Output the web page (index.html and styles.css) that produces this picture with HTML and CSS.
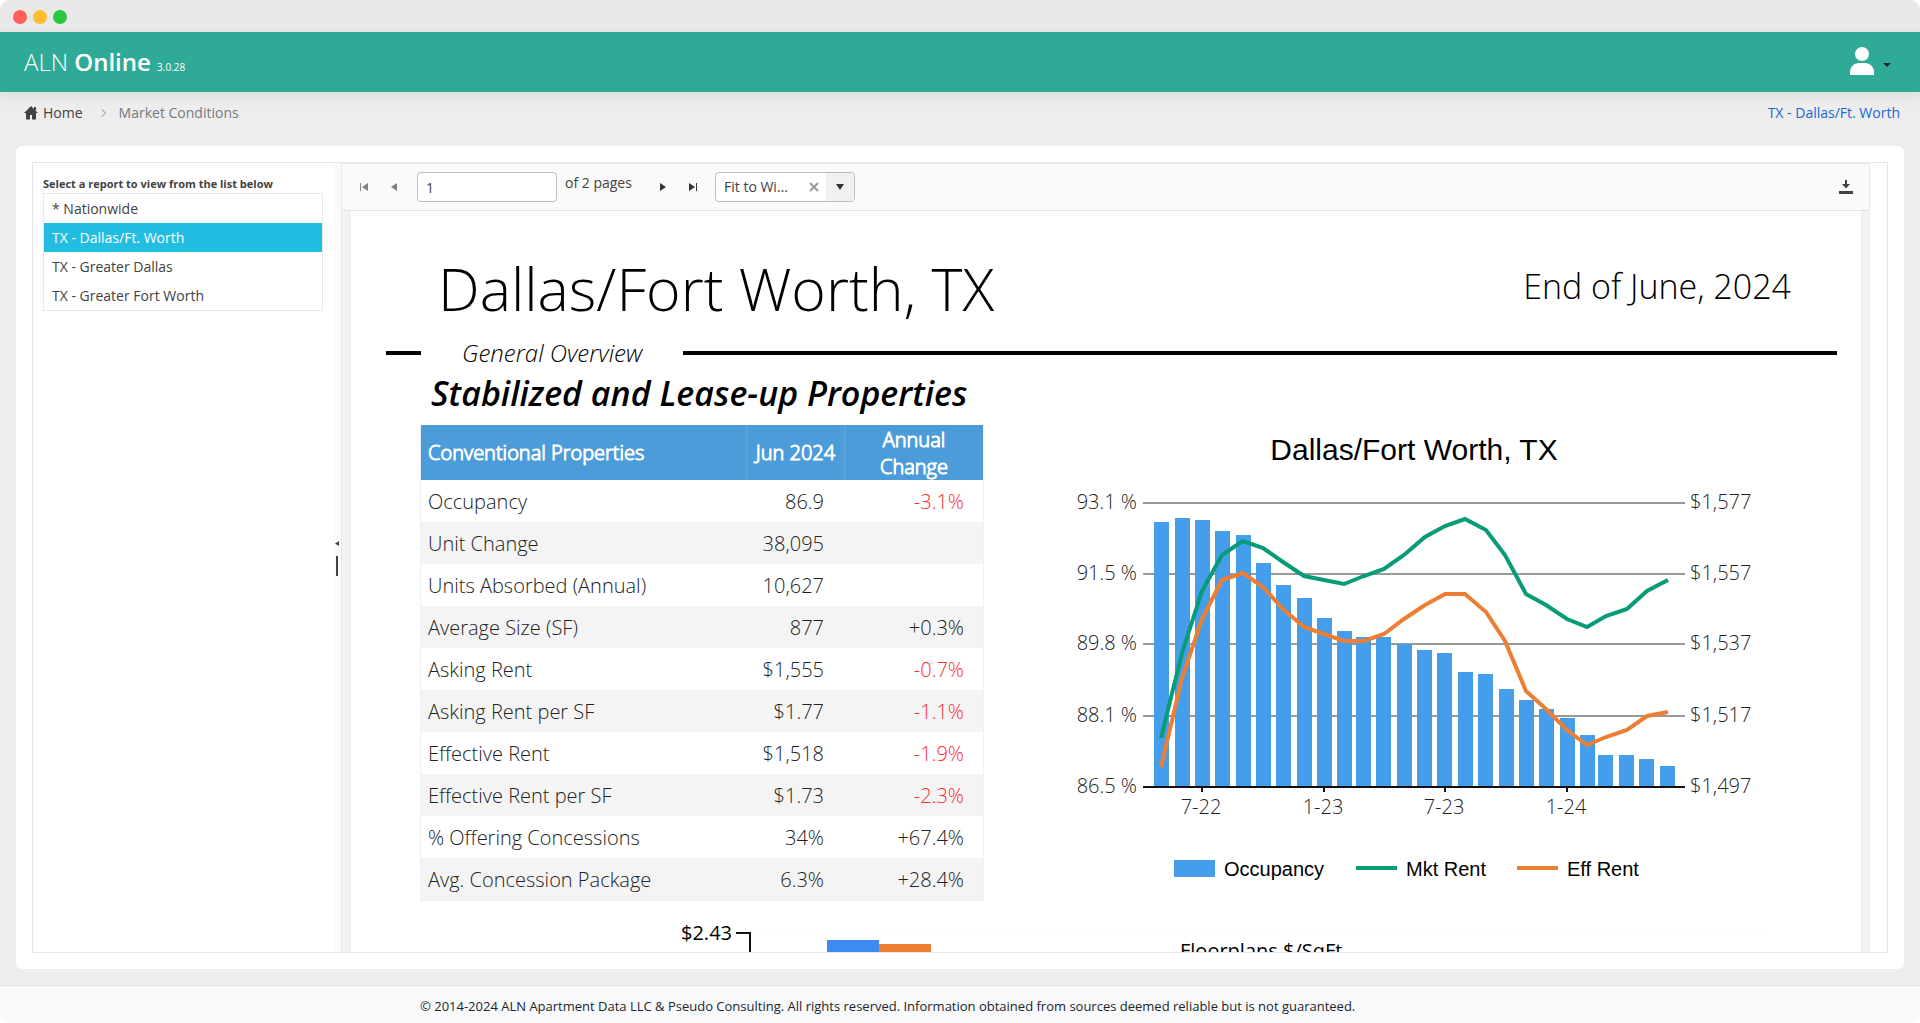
FILE: index.html
```html
<!DOCTYPE html>
<html lang="en">
<head>
<meta charset="utf-8">
<title>ALN Online - Market Conditions</title>
<meta name="viewport" content="width=device-width, initial-scale=1">
<link rel="stylesheet" href="styles.css">
</head>
<body>
<div class="window">
  <div class="titlebar">
    <span class="dot dot-close"></span>
    <span class="dot dot-min"></span>
    <span class="dot dot-max"></span>
  </div>

  <header class="header">
    <a class="brand" href="#"><span class="brand-light">ALN</span> <strong class="brand-strong">Online</strong> <small class="version">3.0.28</small></a>
    <button class="user" type="button" aria-label="Account">
      <svg class="user-icon" viewBox="0 0 26 30" aria-hidden="true"><circle cx="13" cy="8" r="7"/><path d="M1 29v-3c0-5 4-9 9-9h6c5 0 9 4 9 9v3z"/></svg>
      <span class="caret"></span>
    </button>
  </header>

  <nav class="crumbs" aria-label="Breadcrumb">
    <a class="crumb-home" href="#">
      <svg class="home-icon" viewBox="0 0 14 14" aria-hidden="true"><path d="M7 0 14 7h-2v6.500h-4V9H6v4.500H2V7H0z"/><path d="M10 1h2v3h-2z"/></svg>
      Home</a>
    <svg class="chevron" viewBox="0 0 6 8" aria-hidden="true"><path d="M1 .5 4.500 4 1 7.500"/></svg>
    <span class="crumb-current">Market Conditions</span>
    <a class="market-link" href="#">TX - Dallas/Ft. Worth</a>
  </nav>

  <main class="card">
    <div class="splitter">
      <aside class="side">
        <h2 class="side-title">Select a report to view from the list below</h2>
        <ul class="reports">
          <li><button class="report" type="button">* Nationwide</button></li>
          <li><button class="report report-active" type="button">TX - Dallas/Ft. Worth</button></li>
          <li><button class="report" type="button">TX - Greater Dallas</button></li>
          <li><button class="report" type="button">TX - Greater Fort Worth</button></li>
        </ul>
      </aside>
      <div class="splitbar">
        <svg class="split-arrow" viewBox="0 0 4 5" aria-hidden="true"><path d="M4 0v5L0 2.500z"/></svg>
        <span class="split-grip"></span>
      </div>

      <section class="viewer">
        <div class="toolbar">
          <button class="tool tool-off" type="button" aria-label="First page"><svg class="tool-icon" viewBox="0 0 8 8"><path d="M0 0h1v8H0zM8 0v8L2 4z"/></svg></button>
          <button class="tool tool-off" type="button" aria-label="Previous page"><svg class="tool-icon" viewBox="0 0 8 8"><path d="M7 0v8L1 4z"/></svg></button>
          <input class="page-input" type="text" value="1" aria-label="Page number">
          <span class="page-total">of 2 pages</span>
          <button class="tool" type="button" aria-label="Next page"><svg class="tool-icon" viewBox="0 0 8 8"><path d="M1 0v8l6-4z"/></svg></button>
          <button class="tool" type="button" aria-label="Last page"><svg class="tool-icon" viewBox="0 0 8 8"><path d="M7 0h1v8H7zM0 0v8l6-4z"/></svg></button>
          <div class="zoom">
            <select class="zoom-select" aria-label="Zoom"><option>Fit to Width</option></select>
            <button class="zoom-clear" type="button" aria-label="Clear"><svg class="clear-icon" viewBox="0 0 10 10"><path d="m1 1 8 8M9 1 1 9"/></svg></button>
            <span class="zoom-arrow"><svg class="tool-icon" viewBox="0 0 8 8" aria-hidden="true"><path d="M0 1h8L4 7z"/></svg></span>
          </div>
          <button class="tool download" type="button" aria-label="Download"><svg class="download-icon" viewBox="0 0 14 14"><path d="M6 0h2v4h3L7 8.500 3 4h3zM0 11h14v3H0z"/></svg></button>
        </div>

        <div class="pages">
          <article class="page">
            <div class="page-head">
              <h1 class="page-title">Dallas/Fort Worth, TX</h1>
              <p class="page-date">End of June, 2024</p>
            </div>
            <div class="rule">
              <span class="overview">General Overview</span>
            </div>
            <h2 class="subtitle">Stabilized and Lease-up Properties</h2>

            <div class="overview-grid">
              <table class="stats">
                <colgroup><col class="col-name"><col class="col-value"><col class="col-change"></colgroup>
                <thead>
                  <tr><th class="name">Conventional Properties</th><th>Jun 2024</th><th>Annual<br>Change</th></tr>
                </thead>
                <tbody>
                  <tr><td>Occupancy</td><td>86.9</td><td class="down">-3.1%</td></tr>
                  <tr><td>Unit Change</td><td>38,095</td><td></td></tr>
                  <tr><td>Units Absorbed (Annual)</td><td>10,627</td><td></td></tr>
                  <tr><td>Average Size (SF)</td><td>877</td><td>+0.3%</td></tr>
                  <tr><td>Asking Rent</td><td>$1,555</td><td class="down">-0.7%</td></tr>
                  <tr><td>Asking Rent per SF</td><td>$1.77</td><td class="down">-1.1%</td></tr>
                  <tr><td>Effective Rent</td><td>$1,518</td><td class="down">-1.9%</td></tr>
                  <tr><td>Effective Rent per SF</td><td>$1.73</td><td class="down">-2.3%</td></tr>
                  <tr><td>% Offering Concessions</td><td>34%</td><td>+67.4%</td></tr>
                  <tr><td>Avg. Concession Package</td><td>6.3%</td><td>+28.4%</td></tr>
                </tbody>
              </table>

              <svg class="chart" viewBox="0 0 694 474" role="img" aria-label="Occupancy and rent, Dallas/Fort Worth, TX">
                <text class="chart-title" x="343" y="35">Dallas/Fort Worth, TX</text>
                <path class="grid-line" d="M72 78h542M72 149h542M72 219h542M72 291h542"/>
                <g class="bars">
                  <rect x="83" y="97" width="15" height="265"/><rect x="104" y="93" width="15" height="269"/>
                  <rect x="124" y="95" width="15" height="267"/><rect x="144" y="106" width="15" height="256"/>
                  <rect x="165" y="110" width="15" height="252"/><rect x="185" y="138" width="15" height="224"/>
                  <rect x="205" y="160" width="15" height="202"/><rect x="226" y="173" width="15" height="189"/>
                  <rect x="246" y="193" width="15" height="169"/><rect x="266" y="206" width="15" height="156"/>
                  <rect x="285" y="212" width="15" height="150"/><rect x="305" y="212" width="15" height="150"/>
                  <rect x="326" y="219" width="15" height="143"/><rect x="346" y="225" width="15" height="137"/>
                  <rect x="366" y="228" width="15" height="134"/><rect x="387" y="247" width="15" height="115"/>
                  <rect x="407" y="249" width="15" height="113"/><rect x="428" y="264" width="15" height="98"/>
                  <rect x="448" y="275" width="15" height="87"/><rect x="468" y="284" width="15" height="78"/>
                  <rect x="489" y="293" width="15" height="69"/><rect x="509" y="310" width="15" height="52"/>
                  <rect x="527" y="330" width="15" height="32"/><rect x="548" y="330" width="15" height="32"/>
                  <rect x="568" y="334" width="15" height="28"/><rect x="589" y="341" width="15" height="21"/>
                </g>
                <path class="axis" d="M72 362h542M131 362v5M253 362v5M374 362v5M496 362v5"/>
                <polyline class="line line-mkt" points="90,313 111,228 131,166 151,130 172,116 192,123 212,137 233,151 253,155 273,159 293,151 313,144 333,130 354,112 374,101 394,94 415,105 434,130 455,169 475,180 496,194 516,202 535,191 556,184 576,166 597,155"/>
                <polyline class="line line-eff" points="90,342 111,253 131,194 151,155 172,148 192,162 212,184 233,202 253,209 273,216 293,216 313,209 333,194 354,180 374,169 394,169 415,187 434,216 455,266 475,284 496,305 516,320 535,312 556,305 576,291 597,287"/>
                <g class="tick tick-left">
                  <text x="66" y="84">93.1 %</text><text x="66" y="155">91.5 %</text><text x="66" y="225">89.8 %</text><text x="66" y="297">88.1 %</text><text x="66" y="368">86.5 %</text>
                </g>
                <g class="tick">
                  <text x="619" y="84">$1,577</text><text x="619" y="155">$1,557</text><text x="619" y="225">$1,537</text><text x="619" y="297">$1,517</text><text x="619" y="368">$1,497</text>
                </g>
                <g class="tick tick-bottom">
                  <text x="130" y="389">7-22</text><text x="252" y="389">1-23</text><text x="373" y="389">7-23</text><text x="495" y="389">1-24</text>
                </g>
                <g class="bars"><rect x="103" y="435" width="41" height="17"/></g>
                <path class="line line-mkt" d="M285 443h41"/>
                <path class="line line-eff" d="M446 443h41"/>
                <g class="legend">
                  <text x="153" y="451">Occupancy</text><text x="335" y="451">Mkt Rent</text><text x="496" y="451">Eff Rent</text>
                </g>
              </svg>
            </div>

            <svg class="chart sqft" viewBox="0 0 1510 160" role="img" aria-label="Floorplans price per square foot">
              <path class="faint-line" d="M400 18h1018"/>
              <path class="axis" d="M385 18h14v142"/>
              <text class="sqft-label sqft-tick" x="381" y="25">$2.43</text>
              <rect class="sqft-mkt" x="476" y="25" width="52" height="135"/>
              <rect class="sqft-eff" x="528" y="29" width="52" height="131"/>
              <text class="sqft-label" x="829" y="43">Floorplans $/SqFt</text>
            </svg>
          </article>
        </div>
      </section>
    </div>
  </main>

  <footer class="footer">
    <p class="legal">© 2014-2024 ALN Apartment Data LLC &amp; Pseudo Consulting. All rights reserved. Information obtained from sources deemed reliable but is not guaranteed.</p>
  </footer>
</div>
</body>
</html>
```
FILE: styles.css
```css
* { box-sizing: border-box; }

body {
  margin: 0;
  background: #fff;
  color: #424242;
  font: 14px/20px "Open Sans", "Noto Sans", sans-serif;
}

h1, h2, p, ul { margin: 0; padding: 0; }
button, input, select { font: inherit; color: inherit; }
button { border: 0; padding: 0; background: none; cursor: pointer; }
a { color: inherit; text-decoration: none; }
svg { display: block; }

.window {
  display: flex;
  flex-direction: column;
  height: 100vh;
  border-radius: 10px;
  overflow: hidden;
  background: #ededed;
}

.titlebar {
  display: flex;
  flex: none;
  align-items: center;
  gap: 6px;
  height: 32px;
  padding: 2px 13px 0;
  background: #e8e8e8;
}
.dot { width: 14px; height: 14px; border-radius: 50%; }
.dot-close { background: #ff5f57; }
.dot-min { background: #febc2e; }
.dot-max { background: #28c840; }

.header {
  display: flex;
  flex: none;
  align-items: center;
  justify-content: space-between;
  height: 60px;
  padding: 0 29px 0 24px;
  background: #2faa96;
  box-shadow: 0 4px 12px rgba(0, 0, 0, .08);
  color: #fff;
}
.brand { padding-top: 4px; font-size: 24px; line-height: 32px; }
.brand-light { font-weight: 300; }
.brand-strong { font-weight: 600; }
.version { font-size: 10px; }
.user { display: flex; align-items: center; gap: 8px; padding-bottom: 2px; }
.user-icon { width: 26px; height: 30px; fill: #fff; }
.caret {
  margin-top: 8px;
  border: 4px solid transparent;
  border-top-color: #212529;
  border-bottom: 0;
}

.crumbs {
  display: flex;
  flex: none;
  align-items: center;
  height: 42px;
  margin-bottom: 12px;
  padding: 0 20px 0 24px;
}
.crumb-home { display: flex; align-items: center; gap: 5px; }
.home-icon { width: 14px; height: 14px; fill: #424242; }
.chevron { width: 6px; height: 8px; margin: 0 12px 0 18px; fill: none; stroke: #8a8a8a; }
.crumb-current { color: #767b80; }
.market-link { margin-left: auto; color: #1a66d6; }

.card {
  display: flex;
  flex: 1;
  min-height: 0;
  margin: 0 16px;
  padding: 16px;
  border-radius: 6px;
  background: #fff;
}
.splitter {
  display: flex;
  flex: 1;
  min-width: 0;
  border: 1px solid #e8e8e8;
}
.side { flex: none; width: 300px; padding: 12px 10px; }
.side-title { font-size: 11px; line-height: 18px; font-weight: 700; }
.reports { border: 1px solid #e8e8e8; list-style: none; }
.report { display: block; width: 100%; padding: 5px 8px 4px; text-align: left; }
.report-active { background: #22bde0; color: #fff; }

.splitbar {
  display: flex;
  flex: none;
  flex-direction: column;
  align-items: center;
  justify-content: center;
  gap: 10px;
  width: 8px;
  padding-top: 2px;
  background: #fafafa;
}
.split-arrow { width: 4px; height: 5px; fill: #424242; }
.split-grip { width: 2px; height: 20px; background: #424242; }

.viewer {
  display: flex;
  flex: 1;
  flex-direction: column;
  min-width: 0;
  margin-right: 17px;
  border: solid #e8e8e8;
  border-width: 1px 1px 0;
  background: #f4f4f4;
}
.toolbar {
  display: flex;
  flex: none;
  align-items: center;
  height: 47px;
  padding: 0 8px 0 7px;
  border-bottom: 1px solid #e3e3e3;
  background: #fafafa;
}
.tool {
  display: flex;
  flex: none;
  align-items: center;
  justify-content: center;
  width: 30px;
  height: 30px;
}
.tool-off { opacity: .6; }
.tool-icon { width: 8px; height: 8px; fill: #333; }
.page-input {
  width: 140px;
  height: 30px;
  margin: 0 8px;
  padding: 0 8px;
  border: 1px solid #bcbcbc;
  border-radius: 4px;
  background: #fff;
}
.page-total { width: 83px; padding-bottom: 8px; }
.zoom {
  position: relative;
  width: 140px;
  height: 30px;
  margin-left: 7px;
}
.zoom-select {
  width: 100%;
  height: 100%;
  padding: 0 66px 0 8px;
  border: 1px solid #bcbcbc;
  border-radius: 4px;
  background: #fff;
  appearance: none;
  overflow: hidden;
  text-overflow: ellipsis;
  white-space: nowrap;
}
.zoom-clear { position: absolute; top: 10px; right: 36px; }
.clear-icon { width: 10px; height: 10px; fill: none; stroke: #999; stroke-width: 2; }
.zoom-arrow {
  position: absolute;
  inset: 1px 1px 1px auto;
  display: flex;
  align-items: center;
  justify-content: center;
  width: 28px;
  border-radius: 0 3px 3px 0;
  background: #f0f0f0;
  pointer-events: none;
}
.download { margin-left: auto; }
.download-icon { width: 14px; height: 14px; fill: #424242; }

.pages {
  flex: 1;
  min-height: 0;
  overflow-y: auto;
  scrollbar-width: none;
  padding: 0 8px 0 9px;
}
.page {
  background: #fff;
  box-shadow: 0 0 10px rgba(0, 0, 0, .06);
  color: #000;
}
.page-head {
  display: flex;
  align-items: flex-start;
  justify-content: space-between;
  padding: 37px 70px 0 87px;
}
.page-title { font-size: 59px; line-height: 80px; font-weight: 300; }
.page-date { font-size: 34px; line-height: 76px; font-weight: 300; }
.rule {
  display: flex;
  align-items: center;
  gap: 41px;
  height: 40px;
  margin-top: 5px;
  padding: 0 24px 0 35px;
}
.rule::before, .rule::after { content: ""; height: 4px; background: #000; }
.rule::before { width: 35px; }
.rule::after { flex: 1; }
.overview { font-size: 24px; line-height: 40px; font-weight: 300; font-style: italic; }
.subtitle {
  margin-bottom: 12px;
  padding-left: 80px;
  font-size: 34px;
  line-height: 40px;
  font-weight: 600;
  font-style: italic;
}

.overview-grid {
  display: grid;
  grid-template-columns: 564px minmax(0, 1fr);
  gap: 87px;
  align-items: start;
  padding: 0 96px 0 69px;
}
.stats {
  width: 100%;
  border-collapse: separate;
  border-spacing: 0;
  border: 1px solid #f0f0f0;
  border-top: 0;
  table-layout: fixed;
  font-size: 20px;
  line-height: 27px;
}
.col-value { width: 98px; }
.col-change { width: 139px; }
.stats th {
  height: 55px;
  padding: 0;
  background: #4c9cd9;
  color: #fff;
  font-weight: 300;
  -webkit-text-stroke: 1px #fff;
  text-align: center;
}
.stats th + th { border-left: 1px solid #5fa7dd; }
.stats .name { padding-left: 7px; text-align: left; }
.stats td {
  height: 42px;
  padding: 0 20px 0 7px;
  color: #222;
  font-weight: 300;
  text-align: right;
}
.stats td:last-child { padding-right: 19px; }
.stats td:first-child { text-align: left; }
.stats tr:nth-child(even) td { background: #f4f4f4; }
.stats .down { color: #fb2c2c; }

.chart { width: 100%; height: auto; }
.chart-title {
  font: 30px "Liberation Sans", Arial, sans-serif;
  text-anchor: middle;
}
.grid-line { fill: none; stroke: #999; stroke-width: 2; }
.faint-line { stroke: #fafafa; }
.bars { fill: #449eeb; }
.axis { fill: none; stroke: #111; stroke-width: 2; }
.line { fill: none; stroke-width: 4; }
.line-mkt { stroke: #079b77; }
.line-eff { stroke: #ec7f33; }
.tick { font-size: 20px; font-weight: 300; fill: #222; }
.tick-left { text-anchor: end; }
.tick-bottom { text-anchor: middle; }
.legend { font: 20px "Liberation Sans", Arial, sans-serif; }
.sqft { margin-top: 14px; }
.sqft-label { font-size: 20px; }
.sqft-tick { text-anchor: end; }
.sqft-mkt { fill: #3d8bf2; }
.sqft-eff { fill: #ec7f33; }

.footer {
  flex: none;
  margin-top: 16px;
  padding: 10px 16px 7px;
  border-top: 1px solid #dee2e6;
  background: #f8f9fb;
  color: #212529;
}
.legal { max-width: 1080px; margin: 0 auto; font-size: 13px; }
```
